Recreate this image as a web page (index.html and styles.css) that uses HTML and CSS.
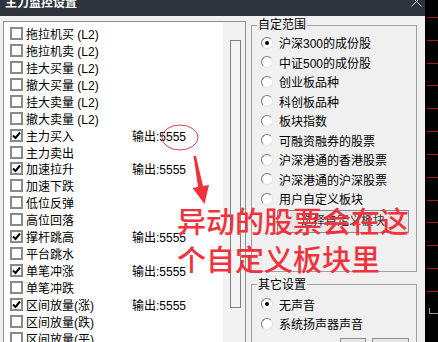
FILE: index.html
```html
<!DOCTYPE html>
<html lang="zh-CN">

<head>
    <meta charset="UTF-8">
    <title>主力监控设置</title>
    <link rel="stylesheet" href="styles.css">
</head>

<body>
    <div class="screen">
        <div class="dialog">
            <div class="titlebar">
                <span class="title">主力监控设置</span>
                <svg class="close" width="11" height="11" viewBox="0 0 11 11">
                    <path d="M0.5 0.5 L10.5 10.5 M10.5 0.5 L0.5 10.5" stroke="#c9ccd2" stroke-width="1" fill="none"/>
                </svg>
            </div>
            <div class="content">
                <div class="listbox">
                    <div class="items">
                        <div class="item"><span class="box"></span><span class="name">拖拉机买 (L2)</span></div>
                        <div class="item"><span class="box"></span><span class="name">拖拉机卖 (L2)</span></div>
                        <div class="item"><span class="box"></span><span class="name">挂大买量 (L2)</span></div>
                        <div class="item"><span class="box"></span><span class="name">撤大买量 (L2)</span></div>
                        <div class="item"><span class="box"></span><span class="name">挂大卖量 (L2)</span></div>
                        <div class="item"><span class="box"></span><span class="name">撤大卖量 (L2)</span></div>
                        <div class="item"><span class="box checked"><svg width="9" height="9" viewBox="0 0 9 9"><path d="M1 4.5 L3.5 7 L8 1.5" stroke="#000" stroke-width="2" fill="none"/></svg></span><span class="name">主力买入</span><span class="out">输出:5555</span></div>
                        <div class="item"><span class="box"></span><span class="name">主力卖出</span></div>
                        <div class="item"><span class="box checked"><svg width="9" height="9" viewBox="0 0 9 9"><path d="M1 4.5 L3.5 7 L8 1.5" stroke="#000" stroke-width="2" fill="none"/></svg></span><span class="name">加速拉升</span><span class="out">输出:5555</span></div>
                        <div class="item"><span class="box"></span><span class="name">加速下跌</span></div>
                        <div class="item"><span class="box"></span><span class="name">低位反弹</span></div>
                        <div class="item"><span class="box"></span><span class="name">高位回落</span></div>
                        <div class="item"><span class="box checked"><svg width="9" height="9" viewBox="0 0 9 9"><path d="M1 4.5 L3.5 7 L8 1.5" stroke="#000" stroke-width="2" fill="none"/></svg></span><span class="name">撑杆跳高</span><span class="out">输出:5555</span></div>
                        <div class="item"><span class="box"></span><span class="name">平台跳水</span></div>
                        <div class="item"><span class="box checked"><svg width="9" height="9" viewBox="0 0 9 9"><path d="M1 4.5 L3.5 7 L8 1.5" stroke="#000" stroke-width="2" fill="none"/></svg></span><span class="name">单笔冲涨</span><span class="out">输出:5555</span></div>
                        <div class="item"><span class="box"></span><span class="name">单笔冲跌</span></div>
                        <div class="item"><span class="box checked"><svg width="9" height="9" viewBox="0 0 9 9"><path d="M1 4.5 L3.5 7 L8 1.5" stroke="#000" stroke-width="2" fill="none"/></svg></span><span class="name">区间放量(涨)</span><span class="out">输出:5555</span></div>
                        <div class="item"><span class="box"></span><span class="name">区间放量(跌)</span></div>
                        <div class="item"><span class="box"></span><span class="name">区间放量(平)</span></div>
                    </div>
                    <div class="scrollbar">
                        <div class="thumb"></div>
                    </div>
                </div>
                <div class="side">
                    <fieldset class="group range">
                        <legend>自定范围</legend>
                        <div class="radios">
                            <div class="radio"><span class="dot on"></span>沪深300的成份股</div>
                            <div class="radio"><span class="dot"></span>中证500的成份股</div>
                            <div class="radio"><span class="dot"></span>创业板品种</div>
                            <div class="radio"><span class="dot"></span>科创板品种</div>
                            <div class="radio"><span class="dot"></span>板块指数</div>
                            <div class="radio"><span class="dot"></span>可融资融券的股票</div>
                            <div class="radio"><span class="dot"></span>沪深港通的香港股票</div>
                            <div class="radio"><span class="dot"></span>沪深港通的沪深股票</div>
                            <div class="radio"><span class="dot"></span>用户自定义板块</div>
                        </div>
                        <div class="btn wide">选择自定义板块</div>
                    </fieldset>
                    <fieldset class="group sound">
                        <legend>其它设置</legend>
                        <div class="radios">
                            <div class="radio"><span class="dot on"></span>无声音</div>
                            <div class="radio"><span class="dot"></span>系统扬声器声音</div>
                        </div>
                        <div class="btn-row">
                            <div class="btn small"></div>
                            <div class="btn mid"></div>
                        </div>
                    </fieldset>
                </div>
            </div>
        </div>
        <div class="chart">
            <div class="chart-lines"></div>
            <div class="chart-tick"></div>
        </div>

        <svg class="marks" width="438" height="342" viewBox="0 0 438 342">
            <ellipse cx="180" cy="137.5" rx="18" ry="12.5" stroke="#d8404c" stroke-width="1" fill="none"/>
            <polygon points="193.5,156 196,156 203,186 209,185 204.5,204 192.5,188 198,187" fill="#f0323c"/>
        </svg>
        <div class="note">异动的股票会在这<br>个自定义板块里</div>
    </div>
</body>

</html>
```

FILE: styles.css
```css
body {
    margin: 0;
    background-color: #000;
    font-family: "Liberation Sans", "Noto Sans CJK SC", sans-serif;
    font-size: 12px;
    color: #000;
}

.screen {
    position: relative;
    display: flex;
    width: 438px;
    height: 342px;
    overflow: hidden;
}

.dialog {
    width: 425px;
    background-color: #f0f0f0;
    display: flex;
    flex-direction: column;
}

.titlebar {
    height: 16px;
    flex-shrink: 0;
    background-color: #30343c;
    display: flex;
    justify-content: space-between;
    overflow: hidden;
    padding: 0 3px 0 5px;
}

.title {
    color: #fff;
    font-weight: bold;
    font-size: 12px;
    line-height: 16px;
    margin-top: -5px;
}

.close {
    margin-top: -4px;
}

.content {
    flex: 1;
    min-height: 0;
    overflow: hidden;
    display: flex;
    align-items: flex-start;
    gap: 5px;
    padding: 2px 0 0 3px;
}

/* left check list */

.listbox {
    width: 243px;
    height: 330px;
    flex-shrink: 0;
    margin-top: 3px;
    box-sizing: border-box;
    border: 1px solid #8e8f8f;
    border-bottom: none;
    background-color: #fff;
    display: flex;
}

.items {
    flex: 1;
    padding: 3px 0 0 6px;
}

.item {
    display: flex;
    align-items: center;
    height: 16.95px;
    white-space: nowrap;
}

.box {
    width: 13px;
    height: 13px;
    box-sizing: border-box;
    border: 2px solid #8a8a8a;
    background-color: #fff;
    margin-right: 3px;
    display: flex;
    align-items: center;
    justify-content: center;
    flex-shrink: 0;
}

.name {
    width: 106px;
}

.scrollbar {
    width: 22px;
    background-color: #f2f2f2;
    padding: 18px 0 0 7px;
    box-sizing: border-box;
}

.thumb {
    width: 11px;
    height: 268px;
    box-sizing: border-box;
    border: 1px solid #808080;
    background-color: #f4f4f4;
}

/* right side groups */

.side {
    width: 166px;
    flex-shrink: 0;
}

.group {
    margin: 0;
    padding: 0;
    min-width: 0;
    border: 1px solid #a2a2a2;
}

.group legend {
    margin-left: 5px;
    padding: 0 1px;
    line-height: 14px;
}

.range {
    padding-bottom: 38px;
}

.sound {
    margin-top: 6px;
    height: 80px;
}

.radios {
    padding: 1px 0 0 9px;
}

.sound .radios {
    padding-top: 3px;
}

.radio {
    display: flex;
    align-items: center;
    height: 19.5px;
    white-space: nowrap;
}

.dot {
    width: 12px;
    height: 12px;
    box-sizing: border-box;
    border-radius: 50%;
    border: 1px solid;
    border-color: #7c7c7c #e4e4e4 #e4e4e4 #7c7c7c;
    background-color: #fff;
    margin-right: 6px;
    display: flex;
    align-items: center;
    justify-content: center;
}

.dot.on::after {
    content: "";
    width: 4px;
    height: 4px;
    border-radius: 50%;
    background-color: #000;
}

.btn {
    box-sizing: border-box;
    border: 1px solid #8a8a8a;
    background-color: #e6e6e6;
    text-align: center;
    color: #333;
}

.btn.wide {
    width: 132px;
    height: 23px;
    line-height: 21px;
    margin: 1px 0 0 25px;
}

.btn-row {
    display: flex;
    justify-content: flex-end;
    gap: 6px;
    padding-right: 7px;
    margin-top: 4px;
}

.btn.small {
    width: 26px;
    height: 23px;
}

.btn.mid {
    width: 37px;
    height: 23px;
}

/* chart strip on the right */

.chart {
    width: 13px;
    background-color: #000;
}

.chart-lines {
    height: 296px;
    margin-left: 2px;
    background-image: repeating-linear-gradient(to bottom, transparent 0, transparent 17px, #a01c1c 17px, #a01c1c 18px, transparent 18px, transparent 22.83px);
}

.chart-tick {
    height: 5px;
    margin: 12px 0 0 4px;
    border-left: 1px solid #9a9a9a;
    border-bottom: 1px solid #9a9a9a;
}

/* red annotation */

.marks {
    position: absolute;
    left: 0;
    top: 0;
    pointer-events: none;
}

.note {
    position: absolute;
    left: 177px;
    top: 201px;
    color: #f0323c;
    font-family: "Noto Sans CJK SC", sans-serif;
    font-size: 29px;
    font-weight: 500;
    line-height: 38px;
    white-space: nowrap;
}
```
